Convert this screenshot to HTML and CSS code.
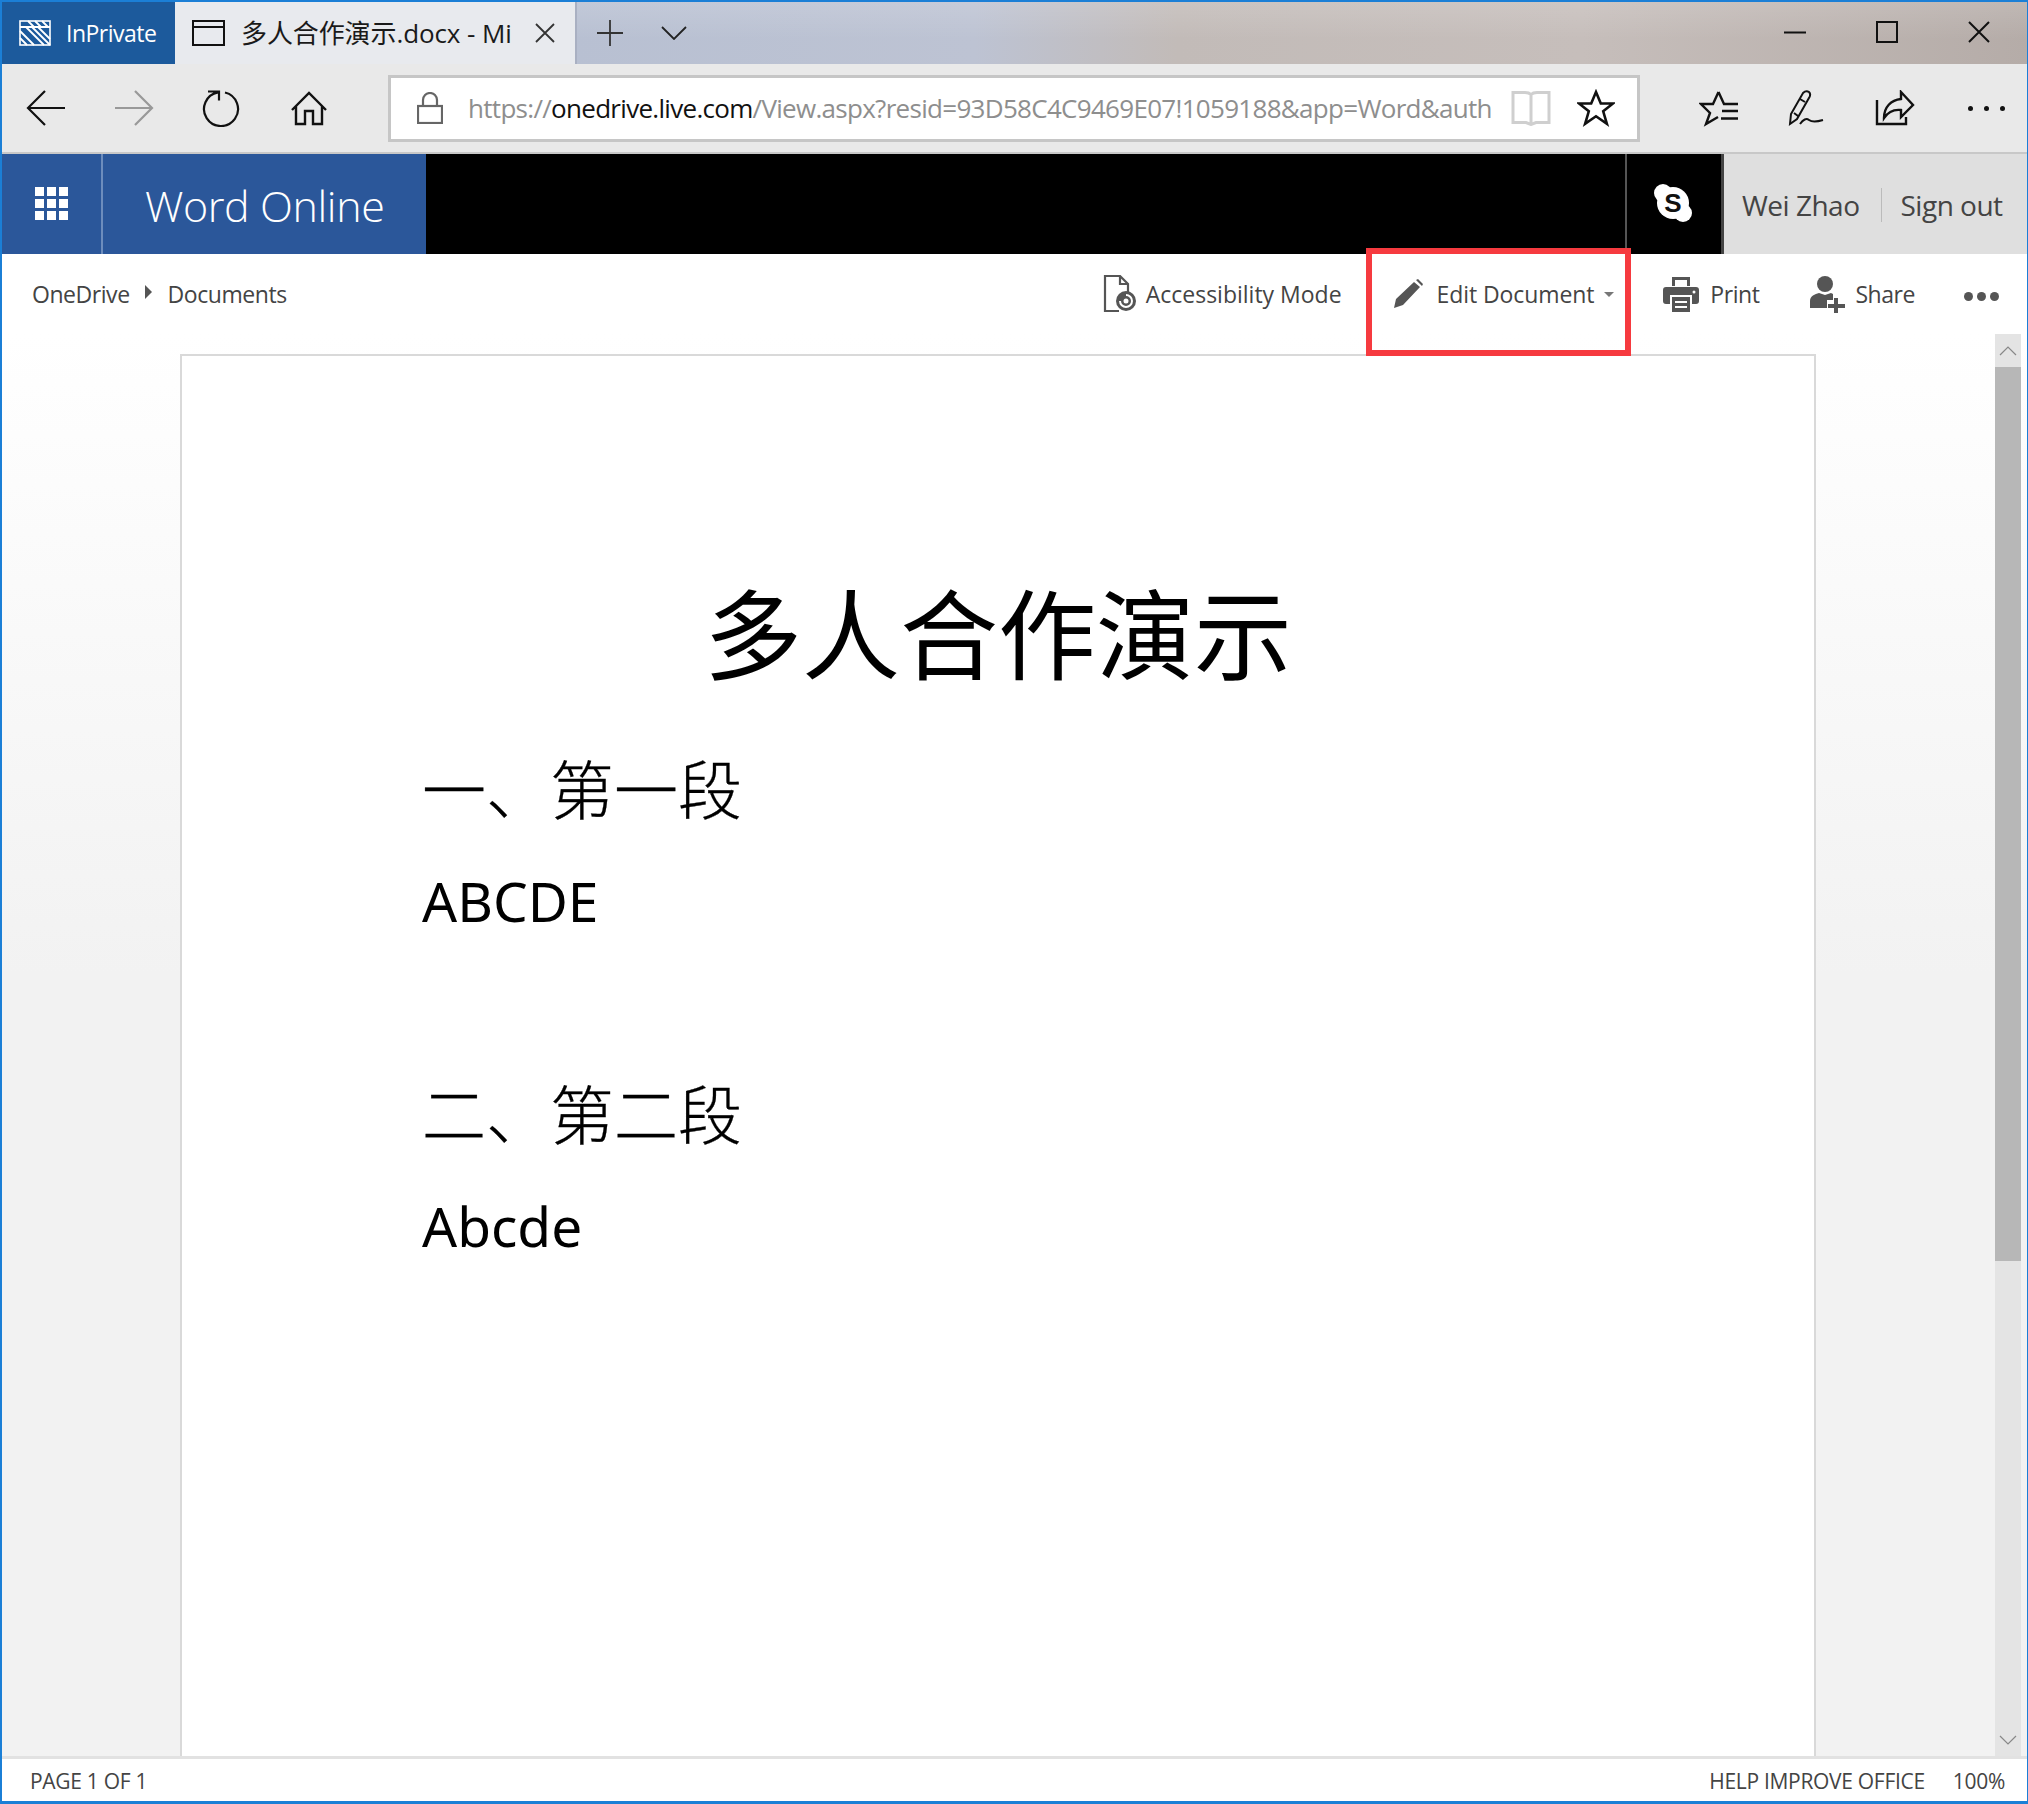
FILE: index.html
```html
<!DOCTYPE html>
<html lang="zh">
  <head>
    <meta charset="UTF-8" />
    <title>多人合作演示.docx - Microsoft Edge</title>
    <link rel="stylesheet" href="styles.css">
  </head>
  <body>
    <div class="window">
      <!-- Tabs -->
      <div class="tabbar">
        <div class="inprivate">
          <svg class="ip-icon" width="32" height="26" viewBox="0 0 32 26" fill="none" stroke="#fff" stroke-width="1.6">
            <rect x="1" y="1" width="30" height="24"/>
            <path d="M1 7h30M7 7l18 18M13 7l18 18M1 11l14 14M1 18l7 7M19 7l12 12M9 1l6 6M16 1l6 6M23 1l6 6" stroke-width="1.8"/>
          </svg>
          <span>InPrivate</span>
        </div>
        <div class="tab">
          <svg class="tab-icon" width="33" height="26" viewBox="0 0 33 26" fill="none" stroke="#111" stroke-width="2">
            <rect x="1" y="1" width="31" height="24"/>
            <path d="M1 7h31"/>
          </svg>
          <span class="tab-title">多人合作演示.docx - Mi</span>
          <svg class="tab-close" width="20" height="20" viewBox="0 0 20 20" stroke="#333" stroke-width="1.8">
            <path d="M1 1l18 18M19 1L1 19"/>
          </svg>
        </div>
        <div class="tab-tools">
          <svg width="28" height="28" viewBox="0 0 28 28" stroke="#333" stroke-width="1.8"><path d="M14 1v26M1 14h26"/></svg>
          <svg width="26" height="14" viewBox="0 0 26 14" fill="none" stroke="#222" stroke-width="1.8"><path d="M1 1l12 12L25 1"/></svg>
        </div>
        <div class="win-buttons">
          <svg width="22" height="3" viewBox="0 0 22 3" stroke="#111" stroke-width="2"><path d="M0 1.500h22"/></svg>
          <svg width="22" height="22" viewBox="0 0 22 22" fill="none" stroke="#111" stroke-width="2"><rect x="1" y="1" width="20" height="20"/></svg>
          <svg width="22" height="22" viewBox="0 0 22 22" stroke="#111" stroke-width="2"><path d="M1 1l20 20M21 1L1 21"/></svg>
        </div>
      </div>

      <!-- Browser toolbar -->
      <div class="toolbar">
        <div class="nav-buttons">
          <svg width="40" height="36" viewBox="0 0 40 36" fill="none" stroke="#111" stroke-width="2.2"><path d="M39 18H2M19 1L2 18l17 17"/></svg>
          <svg width="40" height="36" viewBox="0 0 40 36" fill="none" stroke="#999" stroke-width="2.2"><path d="M1 18h37M21 1l17 17-17 17"/></svg>
          <svg width="38" height="38" viewBox="0 0 38 38" fill="none" stroke="#111" stroke-width="2.2"><path d="M23 3.500A17 17 0 1 1 16 3.300M6 2.500h11v9"/></svg>
          <svg class="nav-home" width="36" height="35" viewBox="0 0 36 35" fill="none" stroke="#111" stroke-width="2.4"><path d="M1 19L18 2l17 17M5 15v18h9V20h8v13h9V15"/></svg>
        </div>
        <div class="address">
          <svg class="lock" width="26" height="32" viewBox="0 0 26 32" fill="none" stroke="#666" stroke-width="2.2"><rect x="1" y="14" width="24" height="17"/><path d="M6 14V8a7 7 0 0 1 14 0v6"/></svg>
          <div class="url"><span class="url-dim">https://</span><span class="url-host">onedrive.live.com</span><span class="url-dim">/View.aspx?resid=93D58C4C9469E07!1059188&amp;app=Word&amp;auth</span></div>
          <svg class="read" width="40" height="36" viewBox="0 0 40 36" fill="none" stroke="#cfcfcf" stroke-width="3"><path d="M2 2.500h12c2 0 5 1 6 2 1-1 4-2 6-2h12v30H25l-5 2-5-2H2zM20 4.500v29"/></svg>
          <svg class="star" width="38" height="38" viewBox="0 0 38 38" fill="none" stroke="#111" stroke-width="2.600"><path d="M19 3l4.800 11.500H36l-9.800 7.800 3.700 12.500L19 27.300 8.100 34.800l3.700-12.500L2 14.500h12.200z"/></svg>
        </div>
        <div class="tool-buttons">
          <svg width="40" height="38" viewBox="0 0 40 38" fill="none" stroke="#111" stroke-width="2.400"><path d="M19.500 3L25 15h14M19.500 3L14 15H2l9 9-4 11 12-7M23 22h16M22 29.500h17"/></svg>
          <svg width="38" height="38" viewBox="0 0 38 38" fill="none" stroke="#111" stroke-width="2"><path d="M2 35l1-10L15 4q3-3 6-1 2 2 .5 5L9 30zM12 10l5 3M6 24l4 3M12 35q5-7 9-4t14 0"/></svg>
          <svg width="40" height="36" viewBox="0 0 40 36" fill="none" stroke="#111" stroke-width="2.400"><path d="M2 10v24h29v-7M26 2l12 13-12 12v-7c-8-1-13 2-17 8 0-11 7-18 17-19z"/></svg>
          <div class="dots-small"><i></i><i></i><i></i></div>
        </div>
      </div>

      <!-- Office suite bar -->
      <div class="suitebar">
        <div class="waffle-cell">
          <div class="waffle"><i></i><i></i><i></i><i></i><i></i><i></i><i></i><i></i><i></i></div>
        </div>
        <div class="app-name">Word Online</div>
        <div class="suite-space"></div>
        <div class="skype-cell">
          <svg width="40" height="40" viewBox="0 0 40 40"><circle cx="10" cy="10" r="9" fill="#fff"/><circle cx="30" cy="30" r="9" fill="#fff"/><circle cx="20" cy="20" r="16" fill="#fff"/><text x="20" y="29" font-family="Liberation Sans" font-size="26" font-weight="700" text-anchor="middle" fill="#111">S</text></svg>
        </div>
        <div class="user-cell">
          <span>Wei Zhao</span>
          <span class="user-sep"></span>
          <span>Sign out</span>
        </div>
      </div>

      <!-- Word command bar -->
      <div class="commandbar">
        <div class="crumbs">
          <span>OneDrive</span>
          <span class="crumb-arrow"></span>
          <span>Documents</span>
        </div>
        <div class="commands">
          <div class="cmd cmd-access">
            <svg width="34" height="38" viewBox="0 0 34 38" fill="none" stroke="#555" stroke-width="2.200"><path d="M16 36H2V1h15l8 8v8M17 1v8h8"/><circle cx="23" cy="26" r="10" fill="#555" stroke="none"/><path d="M23 20a6 6 0 1 1-6 6" stroke="#fff" stroke-width="2"/><circle cx="23" cy="26" r="2.500" fill="#fff" stroke="none"/></svg>
            <span>Accessibility Mode</span>
          </div>
          <div class="cmd cmd-edit">
            <svg width="30" height="30" viewBox="0 0 30 30" fill="#555"><path d="M1 29l2-9L21 3l6 5L10 26zM23 1l2-1 5 5-1 2z"/></svg>
            <span>Edit Document</span>
            <span class="caret"></span>
          </div>
          <div class="cmd cmd-print">
            <svg width="36" height="36" viewBox="0 0 36 36" fill="#555"><path d="M9 1h18v9h-3V4H12v6H9z"/><path d="M3 11h30a3 3 0 0 1 3 3v11a3 3 0 0 1-3 3h-4v-9H7v9H3a3 3 0 0 1-3-3V14a3 3 0 0 1 3-3z"/><path d="M9 21h18v15H9zM12 25v2h12v-2zM12 30v2h12v-2z" fill-rule="evenodd"/><circle cx="31" cy="16" r="1.500" fill="#fff"/></svg>
            <span>Print</span>
          </div>
          <div class="cmd cmd-share">
            <svg width="36" height="38" viewBox="0 0 36 38" fill="#555"><circle cx="15" cy="9" r="8"/><path d="M0 33v-7c0-5 5-7 9-8l6 2 6-2 2 1v6h-6v8z"/><path d="M24 23h4v6h7v4h-7v5h-4v-5h-6v-4h6z"/></svg>
            <span>Share</span>
          </div>
          <div class="dots-big"><i></i><i></i><i></i></div>
        </div>
      </div>

      <!-- Document area -->
      <div class="canvas">
        <div class="page">
          <h1 class="doc-title">多人合作演示</h1>
          <h2 class="doc-head">一、第一段</h2>
          <p class="doc-text">ABCDE</p>
          <p class="doc-blank"></p>
          <h2 class="doc-head">二、第二段</h2>
          <p class="doc-text">Abcde</p>
        </div>
        <div class="scrollbar">
          <div class="scroll-btn"><svg width="18" height="10" viewBox="0 0 18 10" fill="none" stroke="#888" stroke-width="1.200"><path d="M1 9l8-8 8 8"/></svg></div>
          <div class="scroll-thumb"></div>
          <div class="scroll-track"></div>
          <div class="scroll-btn"><svg width="18" height="10" viewBox="0 0 18 10" fill="none" stroke="#888" stroke-width="1.200"><path d="M1 1l8 8 8-8"/></svg></div>
        </div>
      </div>

      <!-- Status bar -->
      <div class="statusbar">
        <span>PAGE 1 OF 1</span>
        <span class="status-right">HELP IMPROVE OFFICE</span>
        <span class="status-zoom">100%</span>
      </div>

      <!-- Red annotation round the edit button -->
      <div class="highlight"></div>
    </div>
  </body>
</html>
```

FILE: styles.css
```css
* {
  box-sizing: border-box;
}

body {
  margin: 0;
  font-family: "Open Sans", "Noto Sans CJK SC", sans-serif;
  background-color: #fff;
}

.window {
  position: relative;
  width: 2028px;
  height: 1804px;
  display: flex;
  flex-direction: column;
  border: 2px solid #1b7fd6;
  border-right-width: 1px;
  border-bottom-width: 3px;
  overflow: hidden;
}

/* tabs */
.tabbar {
  display: flex;
  align-items: stretch;
  height: 62px;
  flex: none;
  background:
    linear-gradient(180deg, rgba(255, 255, 255, 0.14), rgba(255, 255, 255, 0) 60%),
    linear-gradient(90deg, #b8c0d2 28%, #bdc3d3 48%, #c2bbb8 58%, #c6bebb 78%, #b5aca8 100%);
}

.inprivate {
  width: 173px;
  display: flex;
  align-items: center;
  padding-left: 17px;
  gap: 15px;
  background-color: #1c5a9c;
  color: #fff;
  font-size: 23px;
  letter-spacing: -0.5px;
}

.tab {
  width: 402px;
  display: flex;
  align-items: center;
  padding-left: 17px;
  background-color: #e8eaee;
  border-right: 2px solid #a9b0c2;
  color: #1a1a1a;
  font-size: 26px;
}

.tab-title {
  margin: -3px 0 0 16px;
  width: 276px;
  white-space: nowrap;
  overflow: hidden;
  letter-spacing: -0.1px;
}

.tab-close {
  margin-left: 18px;
}

.tab-tools {
  display: flex;
  align-items: center;
  padding-left: 19px;
  gap: 37px;
}

.win-buttons {
  margin-left: auto;
  display: flex;
  align-items: center;
  gap: 70px;
  padding: 0 37px 2px 0;
}

/* browser toolbar */
.toolbar {
  height: 90px;
  flex: none;
  display: flex;
  align-items: center;
  background-color: #e9e9e9;
  border-bottom: 2px solid #c8c8c8;
}

.nav-buttons {
  width: 386px;
  display: flex;
  align-items: center;
  padding-left: 24px;
  gap: 48px;
}

.nav-home {
  margin-left: 3px;
}

.address {
  width: 1252px;
  height: 67px;
  display: flex;
  align-items: center;
  background-color: #fff;
  border: 3px solid #c6c6c6;
  padding-left: 26px;
}

.url {
  width: 1026px;
  margin-left: 25px;
  overflow: hidden;
  white-space: nowrap;
  font-size: 26px;
  letter-spacing: -0.7px;
}

.url-dim {
  color: #8e8e8e;
}

.url-host {
  color: #111;
}

.read {
  margin-left: 17px;
}

.star {
  margin-left: 26px;
}

.tool-buttons {
  display: flex;
  align-items: center;
  padding-left: 59px;
  gap: 49px;
}

.dots-small {
  display: flex;
  gap: 11px;
  margin-left: 4px;
}

.dots-small i {
  width: 5px;
  height: 5px;
  border-radius: 50%;
  background-color: #111;
}

/* office bar */
.suitebar {
  height: 100px;
  flex: none;
  display: flex;
  background-color: #000;
}

.waffle-cell {
  width: 101px;
  display: flex;
  align-items: center;
  justify-content: center;
  background-color: #2b579a;
  border-right: 2px solid #6d8dbd;
}

.waffle {
  display: grid;
  grid-template-columns: repeat(3, 9px);
  grid-auto-rows: 9px;
  gap: 3px;
  margin-top: -2px;
}

.waffle i {
  background-color: #fff;
}

.app-name {
  width: 323px;
  display: flex;
  align-items: center;
  padding: 2px 0 0 42px;
  background-color: #2b579a;
  color: #fff;
  font-size: 43px;
  font-weight: 300;
  letter-spacing: -0.4px;
}

.suite-space {
  flex: 1;
}

.skype-cell {
  width: 96px;
  display: flex;
  align-items: center;
  justify-content: center;
  border-left: 2px solid #555;
  padding: 0 2px 2px 0;
}

.user-cell {
  width: 306px;
  display: flex;
  align-items: center;
  padding: 2px 0 0 18px;
  background-color: #dfdfdf;
  border-left: 3px solid #444;
  color: #444;
  font-size: 28px;
  letter-spacing: -0.5px;
}

.user-sep {
  width: 1px;
  height: 34px;
  margin: 0 19px 0 21px;
  background-color: #bbb;
}

/* word command bar */
.commandbar {
  height: 80px;
  flex: none;
  display: flex;
  align-items: center;
  background-color: #fff;
  color: #444;
  font-size: 23px;
  letter-spacing: -0.45px;
}

.crumbs {
  display: flex;
  align-items: center;
  padding-left: 30px;
}

.crumb-arrow {
  width: 0;
  height: 0;
  margin: -4px 16px 0 15px;
  border-left: 7px solid #555;
  border-top: 7px solid transparent;
  border-bottom: 7px solid transparent;
}

.commands {
  margin-left: auto;
  display: flex;
  align-items: center;
}

.cmd {
  display: flex;
  align-items: center;
}

.cmd-access {
  gap: 9px;
  letter-spacing: 0;
}

.cmd-edit {
  margin-left: 51px;
  gap: 14px;
  letter-spacing: -0.1px;
}

.caret {
  width: 0;
  height: 0;
  margin-left: -4px;
  border-top: 5px solid #777;
  border-left: 5px solid transparent;
  border-right: 5px solid transparent;
}

.cmd-print {
  margin-left: 49px;
  gap: 11px;
}

.cmd-share {
  margin-left: 51px;
  gap: 9px;
}

.dots-big {
  display: flex;
  gap: 4px;
  margin: 4px 28px 0 49px;
}

.dots-big i {
  width: 9px;
  height: 9px;
  border-radius: 50%;
  background-color: #555;
}

/* document */
.canvas {
  flex: 1;
  min-height: 0;
  display: flex;
  justify-content: space-between;
  padding-left: 178px;
  background: linear-gradient(180deg, #fff 0, #fbfbfb 200px, #f2f2f2 640px);
}

.page {
  width: 1636px;
  margin-top: 20px;
  padding: 208px 0 0 240px;
  background-color: #fff;
  border: 2px solid #d9d9d9;
  border-bottom: 0;
  color: #000;
  font-family: "Noto Sans", "Noto Sans CJK SC", sans-serif;
}

.doc-title {
  margin: 0 0 0 -240px;
  text-align: center;
  font-size: 98px;
  font-weight: 400;
  line-height: 140px;
}

.doc-head {
  margin: 30px 0 0;
  font-size: 64px;
  font-weight: 300;
  line-height: 112px;
  -webkit-text-stroke: 0.3px #000;
}

.doc-text {
  margin: -1px 0 0;
  font-size: 55px;
  line-height: 112px;
}

.doc-blank {
  margin: 0;
  height: 102px;
}

.doc-blank + .doc-head {
  margin-top: 0;
}

.scrollbar {
  width: 26px;
  margin-right: 6px;
  display: flex;
  flex-direction: column;
  background-color: #e4e4e4;
}

.scroll-btn {
  height: 33px;
  flex: none;
  display: flex;
  align-items: center;
  justify-content: center;
}

.scroll-thumb {
  height: 894px;
  flex: none;
  background-color: #b7b7b7;
}

.scroll-track {
  flex: 1;
}

/* status bar */
.statusbar {
  height: 45px;
  flex: none;
  display: flex;
  align-items: center;
  padding: 2px 22px 0 28px;
  background-color: #fff;
  border-top: 3px solid #e2e2e2;
  color: #444;
  font-size: 21px;
  letter-spacing: -0.3px;
}

.status-right {
  margin-left: auto;
}

.status-zoom {
  margin-left: 28px;
}

/* annotation */
.highlight {
  position: absolute;
  left: 1364px;
  top: 246px;
  width: 265px;
  height: 108px;
  border: 6px solid #f63a3f;
}
```
